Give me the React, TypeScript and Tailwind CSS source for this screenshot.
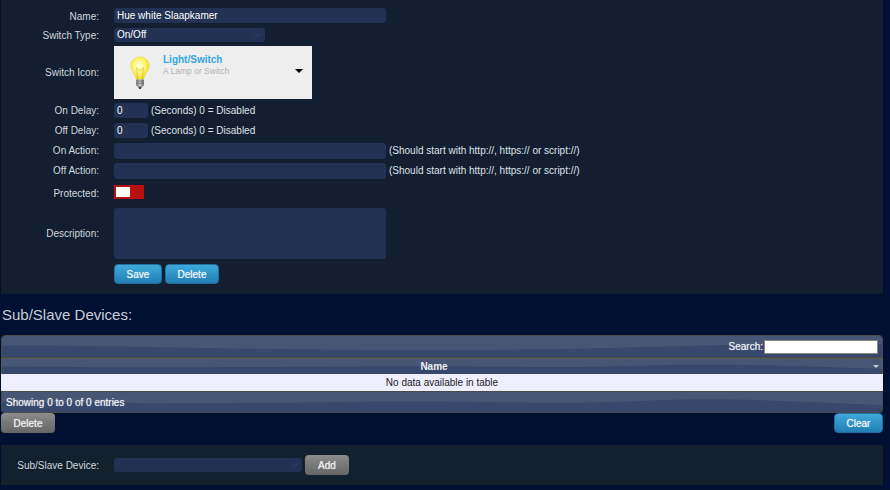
import React from 'react';
import { ChevronDown } from 'lucide-react';

const fieldBg = 'bg-[#233154]';
const softBold = '[text-shadow:0_0_1px_rgba(255,255,255,0.7)]';

function FormLabel({ children, className = '' }: { children: React.ReactNode; className?: string }) {
  return <label className={`w-[98px] shrink-0 text-right text-[#d2d6dc] mr-[15px] ${className}`}>{children}</label>;
}

// wavy texture of the table bars
function WaveBand({ flip = false }: { flip?: boolean }) {
  return (
    <svg
      className="absolute inset-0 w-full h-full"
      viewBox="0 0 882 20"
      preserveAspectRatio="none"
      aria-hidden="true"
    >
      <rect width="882" height="20" fill="#38486c" />
      <path
        d={
          flip
            ? 'M0 10 C150 12 230 11 340 10 C470 8 540 13 640 9 C720 5 780 9 882 13 L882 0 L0 0 Z'
            : 'M0 9 C120 9 200 12 340 13 C480 14 560 13 660 10 C750 8 820 7 882 8 L882 0 L0 0 Z'
        }
        fill="#475675"
      />
    </svg>
  );
}

function BlueButton({ children, className }: { children: React.ReactNode; className: string }) {
  return (
    <button
      type="button"
      className={`h-5 rounded-[4px] border border-[#1f6f9f] bg-gradient-to-b from-[#3fa9da] to-[#217fb4] text-[#f2f6fa] text-[10px] ${softBold} ${className}`}
    >
      {children}
    </button>
  );
}

function GrayButton({ children, className }: { children: React.ReactNode; className: string }) {
  return (
    <button
      type="button"
      className={`h-5 rounded-[4px] bg-gradient-to-b from-[#8c8c8c] via-[#777777] to-[#666666] text-[#f2f2f2] text-[10px] ${softBold} ${className}`}
    >
      {children}
    </button>
  );
}

function Bulb() {
  return (
    <svg width="20" height="34" viewBox="0 0 24 38" preserveAspectRatio="none" aria-hidden="true">
      <defs>
        <radialGradient id="glass" cx="45%" cy="40%" r="60%">
          <stop offset="0%" stopColor="#fffde0" />
          <stop offset="55%" stopColor="#fdf56a" />
          <stop offset="100%" stopColor="#f0d81a" />
        </radialGradient>
        <linearGradient id="base" x1="0" x2="1" y1="0" y2="0">
          <stop offset="0%" stopColor="#6d6d6d" />
          <stop offset="50%" stopColor="#d4d4d4" />
          <stop offset="100%" stopColor="#5c5c5c" />
        </linearGradient>
      </defs>
      <path
        d="M12 1 C5 1 1 6 1 11 C1 16 6 19 7.5 26 L16.5 26 C18 19 23 16 23 11 C23 6 19 1 12 1 Z"
        fill="url(#glass)"
        stroke="#e8d230"
        strokeWidth="0.6"
      />
      <path d="M9 26 L8 13 L11 16 L13 16 L16 13 L15 26" fill="none" stroke="#c9a92a" strokeWidth="0.6" />
      <rect x="7.5" y="26" width="9" height="8" rx="1.5" fill="url(#base)" />
      <path d="M7.5 28 H16.5 M7.5 30.5 H16.5" stroke="#555" strokeWidth="0.7" />
      <path d="M9.5 34 H14.5 L13 37 H11 Z" fill="#444" />
    </svg>
  );
}

export default function App() {
  return (
    <div
      className="w-[890px] h-[490px] overflow-hidden bg-[#001033] text-[10px] text-white"
      style={{ fontFamily: '"Liberation Sans", Arial, sans-serif' }}
    >
      <div className="ml-px w-[882px] h-[294px] bg-[#131f31] pt-2 flex flex-col">
        <div className="flex items-center h-[15px]">
          <FormLabel className="mt-px">Name:</FormLabel>
          <div className={`w-[272px] h-[15px] rounded-[3px] ${fieldBg} px-[3px] leading-[16px]`}>Hue white Slaapkamer</div>
        </div>
        <div className="flex items-center h-[14px] mt-[5px]">
          <FormLabel>Switch Type:</FormLabel>
          <div className={`w-[151px] h-[14px] rounded-[3px] ${fieldBg} pl-[3px] pr-[1px] leading-[14px] flex items-center justify-between`}>
            <span>On/Off</span>
            <ChevronDown size={12} strokeWidth={1.5} className="text-[#3e4d72]" />
          </div>
        </div>
        <div className="flex items-center h-[53px] mt-1">
          <FormLabel>Switch Icon:</FormLabel>
          <div className="w-[198px] h-[53px] bg-[#eeeeee] relative flex items-center pl-4">
            <Bulb />
            <div className="ml-[13px] -mt-[15px]">
              <div className="text-[#34a6e2] font-bold text-[10px] leading-[13px]">Light/Switch</div>
              <div className="text-[#b3b3b3] text-[8.5px] leading-[11px]">A Lamp or Switch</div>
            </div>
            <div className="absolute right-[9px] top-[23px] w-0 h-0 border-x-[4px] border-x-transparent border-t-[4px] border-t-black" />
          </div>
        </div>
        <div className="flex items-center h-[15px] mt-1">
          <FormLabel>On Delay:</FormLabel>
          <div className={`w-[34px] h-[15px] rounded-[3px] ${fieldBg} px-[3px] leading-[15px]`}>0</div>
          <span className="ml-[3px] text-[#dfe2e6]">(Seconds) 0 = Disabled</span>
        </div>
        <div className="flex items-center h-[15px] mt-[5px]">
          <FormLabel>Off Delay:</FormLabel>
          <div className={`w-[34px] h-[15px] rounded-[3px] ${fieldBg} px-[3px] leading-[15px]`}>0</div>
          <span className="ml-[3px] text-[#dfe2e6]">(Seconds) 0 = Disabled</span>
        </div>
        <div className="flex items-center h-4 mt-[5px]">
          <FormLabel className="-mt-[2px]">On Action:</FormLabel>
          <div className={`w-[272px] h-4 rounded-[3px] ${fieldBg}`} />
          <span className="ml-[3px] -mt-[2px] text-[#dfe2e6]">(Should start with http://, https:// or script://)</span>
        </div>
        <div className="flex items-center h-4 mt-1">
          <FormLabel className="-mt-[2px]">Off Action:</FormLabel>
          <div className={`w-[272px] h-4 rounded-[3px] ${fieldBg}`} />
          <span className="ml-[3px] -mt-[2px] text-[#dfe2e6]">(Should start with http://, https:// or script://)</span>
        </div>
        <div className="flex items-center h-[14px] mt-[6px]">
          <FormLabel className="mt-[2px]">Protected:</FormLabel>
          <div className="w-[30px] h-[14px] bg-[#b91010] p-[2px]">
            <div className="w-[14px] h-[10px] bg-white" />
          </div>
        </div>
        <div className="flex items-center h-[51px] mt-[9px]">
          <FormLabel>Description:</FormLabel>
          <div className={`w-[272px] h-[51px] rounded-[3px] ${fieldBg}`} />
        </div>
        <div className="flex mt-[5px] ml-[113px] gap-[3px]">
          <BlueButton className="w-[48px]">Save</BlueButton>
          <BlueButton className="w-[54px]">Delete</BlueButton>
        </div>
      </div>

      <h2 className="mt-3 ml-[2px] h-[18px] text-[15px] leading-[18px] text-[#c9cdd6]">Sub/Slave Devices:</h2>

      <div className="ml-px mt-[11px] w-[882px]">
        <div className={`relative h-[23px] rounded-t-[4px] overflow-hidden border border-[#4a4a4a] flex items-center justify-end pr-[4px] ${softBold}`}>
          <WaveBand />
          <span className="relative text-[#eef0f4] mr-px">Search:</span>
          <div className="relative w-[114px] h-[14px] bg-white border border-[#888]" />
        </div>
        <div className="relative h-4 border-x border-t border-[#5a5a50] overflow-hidden text-center font-bold leading-[15px] pr-4">
          <WaveBand flip />
          <span className="relative text-[#eef0f4]">Name</span>
          <div className="absolute right-[3px] top-[6px] w-0 h-0 border-x-[3px] border-x-transparent border-t-[3px] border-t-[#c8ccd4]" />
        </div>
        <div className="h-[17px] bg-[#eeeeff] text-[#222] text-center leading-[17px]">No data available in table</div>
        <div className={`relative h-[22px] border border-[#4a4a4a] rounded-b-[3px] overflow-hidden flex items-center pl-[4px] pt-px ${softBold}`}>
          <WaveBand flip />
          <span className="relative text-[#eef0f4]">Showing 0 to 0 of 0 entries</span>
        </div>
        <div className="flex justify-between">
          <GrayButton className="w-[54px]">Delete</GrayButton>
          <BlueButton className="w-[49px]">Clear</BlueButton>
        </div>
      </div>

      <div className="mt-3 ml-px w-[882px] h-10 bg-[#13212f] flex items-center">
        <FormLabel>Sub/Slave Device:</FormLabel>
        <div className={`w-[188px] h-[14px] rounded-[3px] ${fieldBg} flex items-center justify-end pr-px`}>
          <ChevronDown size={12} strokeWidth={1.5} className="text-[#3e4d72]" />
        </div>
        <GrayButton className="ml-[3px] w-[44px]">Add</GrayButton>
      </div>
    </div>
  );
}
